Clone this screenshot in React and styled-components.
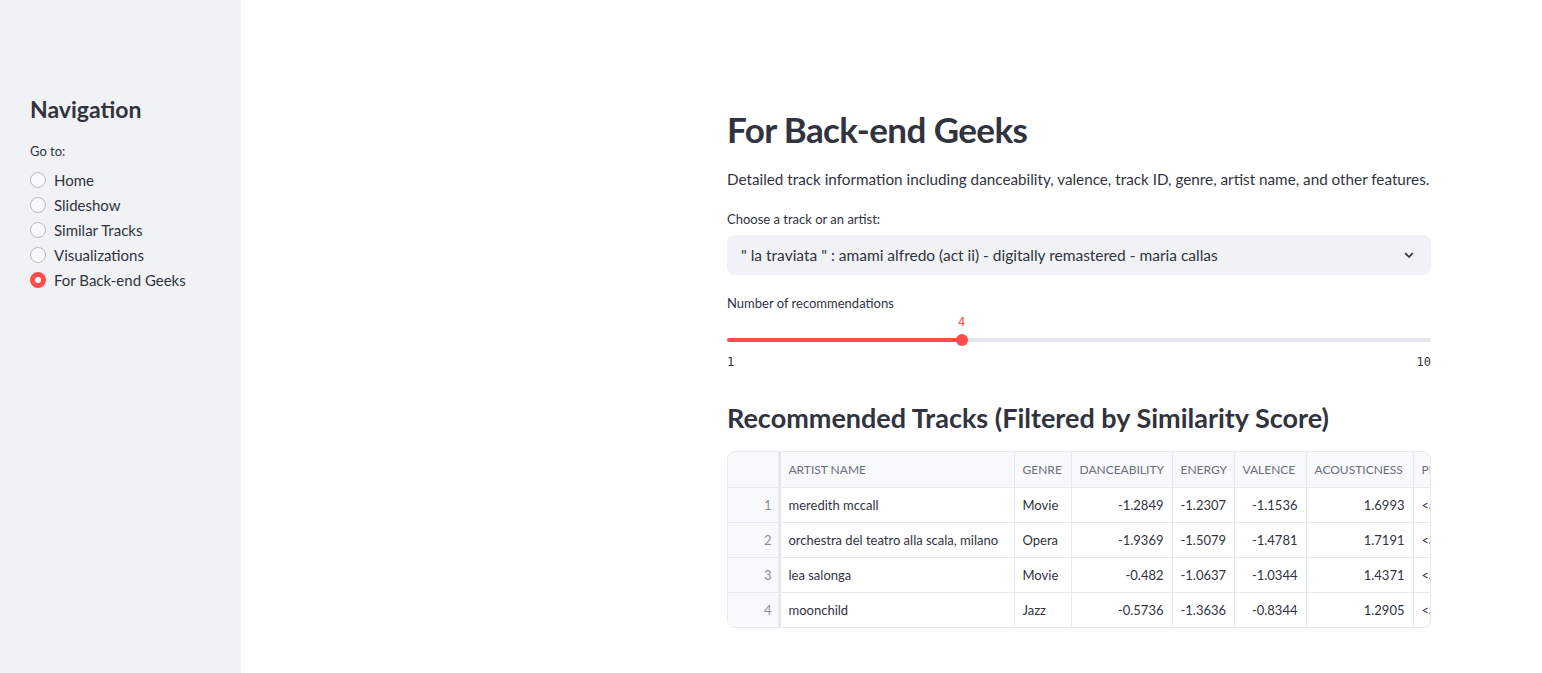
import React from 'react'
import styled, { createGlobalStyle } from 'styled-components'

const GlobalStyle = createGlobalStyle`
  html, body {
    margin: 0;
    padding: 0;
    background: #ffffff;
  }
  body {
    font-family: Lato, "Noto Sans", sans-serif;
    color: #31333f;
  }
`

const pages = ['Home', 'Slideshow', 'Similar Tracks', 'Visualizations', 'For Back-end Geeks']

const columns = [
  { key: 'artist', label: 'Artist name', width: 234 },
  { key: 'genre', label: 'Genre', width: 57 },
  { key: 'dance', label: 'Danceability', width: 101, num: true },
  { key: 'energy', label: 'Energy', width: 62, num: true },
  { key: 'valence', label: 'Valence', width: 72, num: true },
  { key: 'acoustic', label: 'Acousticness', width: 107, num: true },
  { key: 'preview', label: 'Preview', width: 80 },
]

const rows = [
  { artist: 'meredith mccall', genre: 'Movie', dance: '-1.2849', energy: '-1.2307', valence: '-1.1536', acoustic: '1.6993', preview: '<audio controls>' },
  { artist: 'orchestra del teatro alla scala, milano', genre: 'Opera', dance: '-1.9369', energy: '-1.5079', valence: '-1.4781', acoustic: '1.7191', preview: '<audio controls>' },
  { artist: 'lea salonga', genre: 'Movie', dance: '-0.482', energy: '-1.0637', valence: '-1.0344', acoustic: '1.4371', preview: '<audio controls>' },
  { artist: 'moonchild', genre: 'Jazz', dance: '-0.5736', energy: '-1.3636', valence: '-0.8344', acoustic: '1.2905', preview: '<audio controls>' },
]

const sliderPct = `${(3 / 9) * 100}%`

const App = () => (
  <Page>
    <GlobalStyle />
    <Sidebar>
      <NavTitle>Navigation</NavTitle>
      <SmallLabel>Go to:</SmallLabel>
      <RadioList>
        {pages.map((p) => (
          <RadioRow key={p}>
            <RadioDot $checked={p === 'For Back-end Geeks'} />
            <span>{p}</span>
          </RadioRow>
        ))}
      </RadioList>
    </Sidebar>

    <Main>
      <Content>
        <Title>For Back-end Geeks</Title>
        <Lead>
          Detailed track information including danceability, valence, track ID, genre, artist name, and other features.
        </Lead>

        <SmallLabel>Choose a track or an artist:</SmallLabel>
        <Select>
          <span>" la traviata " : amami alfredo (act ii) - digitally remastered - maria callas</span>
          <svg width="16" height="16" viewBox="0 0 24 24" fill="none" stroke="#31333f" strokeWidth="2.6" strokeLinecap="round" strokeLinejoin="round">
            <path d="M7 10l5 5 5-5" />
          </svg>
        </Select>

        <SliderLabel>Number of recommendations</SliderLabel>
        <Slider>
          <SliderValue style={{ left: sliderPct }}>4</SliderValue>
          <Track>
            <Fill style={{ width: sliderPct }} />
            <Thumb style={{ left: sliderPct }} />
          </Track>
          <Ticks>
            <span>1</span>
            <span>10</span>
          </Ticks>
        </Slider>

        <Subheader>Recommended Tracks (Filtered by Similarity Score)</Subheader>

        <TableFrame>
          <Table>
            <colgroup>
              <col style={{ width: 52 }} />
              {columns.map((c) => (
                <col key={c.key} style={{ width: c.width }} />
              ))}
            </colgroup>
            <thead>
              <tr>
                <IndexHead />
                {columns.map((c) => (
                  <HeadCell key={c.key}>{c.label}</HeadCell>
                ))}
              </tr>
            </thead>
            <tbody>
              {rows.map((r, i) => (
                <tr key={i}>
                  <IndexCell>{i + 1}</IndexCell>
                  {columns.map((c) => (
                    <Cell key={c.key} $num={c.num}>{r[c.key]}</Cell>
                  ))}
                </tr>
              ))}
            </tbody>
          </Table>
        </TableFrame>
      </Content>
    </Main>
  </Page>
)

const Page = styled.div`
  display: flex;
  min-height: 673px;
`

const Sidebar = styled.aside`
  width: 241px;
  flex-shrink: 0;
  background: #f0f2f6;
  padding: 93px 30px 0;
  box-sizing: border-box;
`

const NavTitle = styled.h2`
  margin: 0 0 16px;
  font-size: 23px;
  font-weight: 700;
  line-height: 32px;
  color: #31333f;
`

const SmallLabel = styled.div`
  font-size: 13px;
  line-height: 20px;
  margin-bottom: 6px;
  color: #31333f;
`

const RadioList = styled.div`
  display: flex;
  flex-direction: column;
`

const RadioRow = styled.div`
  display: flex;
  align-items: center;
  gap: 8px;
  height: 25px;
  font-size: 15px;
`

const RadioDot = styled.span`
  width: 16px;
  height: 16px;
  box-sizing: border-box;
  border-radius: 50%;
  flex-shrink: 0;
  background: ${(p) => (p.$checked ? '#ffffff' : '#f8f9fb')};
  border: ${(p) => (p.$checked ? '5px solid #ff4b4b' : '1px solid #b8bac2')};
`

const Main = styled.main`
  flex: 1;
  padding: 109px 0 40px 486px;
`

const Content = styled.div`
  width: 704px;
`

const Title = styled.h1`
  margin: 0 0 18px;
  font-size: 35px;
  line-height: 40px;
  font-weight: 700;
  letter-spacing: -0.6px;
  color: #31333f;
`

const Lead = styled.p`
  margin: 0 0 18px;
  font-size: 15.25px;
  line-height: 24px;
  white-space: nowrap;
`

const Select = styled.div`
  display: flex;
  align-items: center;
  justify-content: space-between;
  height: 40px;
  padding: 0 14px;
  border-radius: 8px;
  background: #f0f2f6;
  font-size: 15.5px;

  svg {
    flex-shrink: 0;
  }
`

const SliderLabel = styled(SmallLabel)`
  margin-top: 18px;
  margin-bottom: 0;
`

const Slider = styled.div`
  position: relative;
  padding-top: 25px;
`

const SliderValue = styled.span`
  position: absolute;
  top: 2px;
  transform: translateX(-50%);
  font-family: "DejaVu Sans Mono", monospace;
  font-size: 12px;
  color: #ff4b4b;
`

const Track = styled.div`
  position: relative;
  height: 4px;
  border-radius: 2px;
  background: #e3e6ec;
`

const Fill = styled.div`
  height: 100%;
  border-radius: 2px;
  background: #ff4b4b;
`

const Thumb = styled.span`
  position: absolute;
  top: 50%;
  width: 12px;
  height: 12px;
  border-radius: 50%;
  background: #ff4b4b;
  transform: translate(-50%, -50%);
`

const Ticks = styled.div`
  display: flex;
  justify-content: space-between;
  margin-top: 12px;
  font-family: "DejaVu Sans Mono", monospace;
  font-size: 12px;
  line-height: 16px;
`

const Subheader = styled.h3`
  margin: 31px 0 16px;
  font-size: 27px;
  line-height: 34px;
  font-weight: 700;
  color: #31333f;
`

const TableFrame = styled.div`
  border: 1px solid #e6e9ef;
  border-radius: 8px;
  overflow: hidden;
`

const Table = styled.table`
  border-collapse: collapse;
  table-layout: fixed;
  width: 765px;
  font-size: 13px;

  td, th {
    height: 34px;
    padding: 0 8px;
    border-right: 1px solid #e6e9ef;
    border-bottom: 1px solid #e6e9ef;
    white-space: nowrap;
    overflow: hidden;
  }

  thead th {
    height: 35px;
  }

  tbody tr:last-child td {
    border-bottom: none;
  }
`

const HeadCell = styled.th`
  background: #f8f9fb;
  color: #6b6e7b;
  font-weight: 400;
  text-align: left;
  text-transform: uppercase;
  font-size: 12px;
`

const IndexHead = styled.th`
  background: #f8f9fb;
  box-shadow: inset -2px 0 2px -1px rgba(0, 0, 0, 0.12);
`

const IndexCell = styled.td`
  background: #f8f9fb;
  text-align: right;
  color: #8a8d99;
  box-shadow: inset -2px 0 2px -1px rgba(0, 0, 0, 0.12);
`

const Cell = styled.td`
  text-align: ${(p) => (p.$num ? 'right' : 'left')};
  color: #31333f;
`

export default App
